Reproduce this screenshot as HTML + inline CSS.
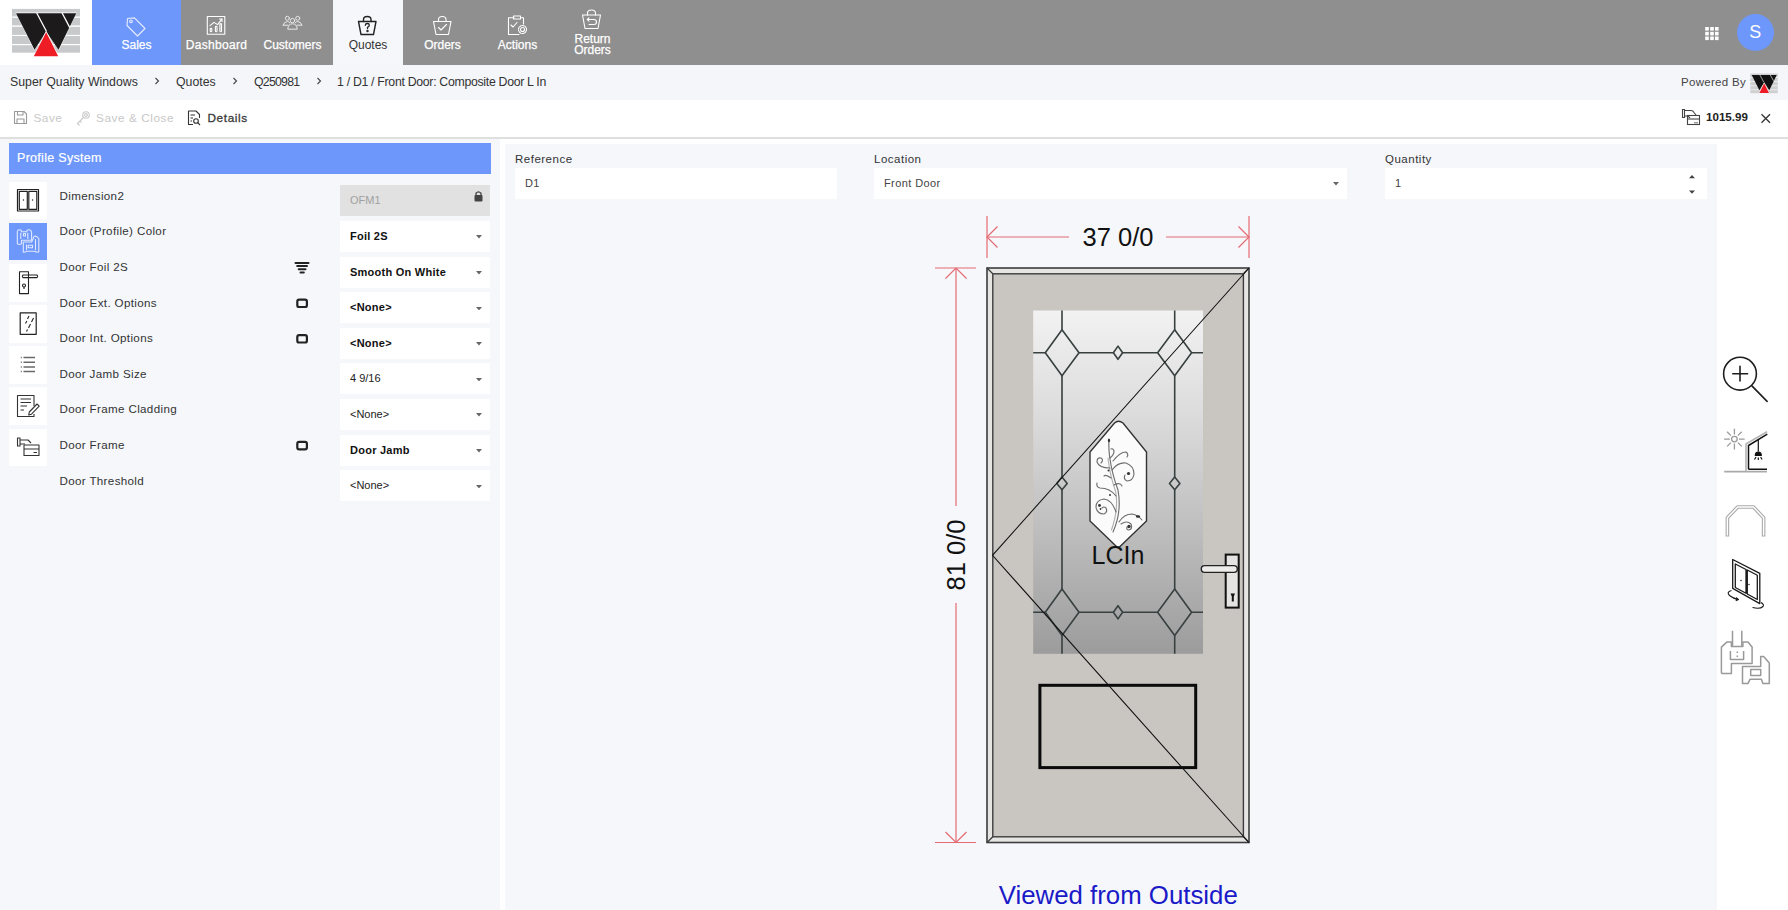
<!DOCTYPE html>
<html><head><meta charset="utf-8">
<style>
*{box-sizing:border-box;margin:0;padding:0}
html,body{width:1788px;height:910px;overflow:hidden;background:#fff;font-family:"Liberation Sans",sans-serif;position:relative}
.a{position:absolute}
.nav{left:0;top:0;width:1788px;height:65px;background:#8f8f8f}
.logo{left:0;top:0;width:92px;height:65px;background:#fff}
.tab{top:0;height:65px;color:#fff;font-size:12px;text-align:center}
.tab .lbl{position:absolute;left:0;right:0;top:38.8px;line-height:13px;-webkit-text-stroke:0.25px currentColor}
.crumb{left:0;top:65px;width:1788px;height:35px;background:#f4f6fa;font-size:12.5px;color:#333}
.tool{left:0;top:100px;width:1788px;height:39px;background:#fff;border-bottom:2px solid #dfdfdf}
.lp{left:0;top:139px;width:500px;height:771px;background:#f5f7fb}
.mp{left:505px;top:143.5px;width:1212px;height:767px;background:#f5f7fb}
.hdr{left:9px;top:143px;width:482px;height:31px;background:#6d97fb;color:#fff;font-size:12.5px;line-height:30px;padding-left:8px;letter-spacing:0.3px;-webkit-text-stroke:0.2px #fff}
.ib{left:9px;width:38px;height:38px;background:#fff}
.lab{left:59.5px;font-size:11.6px;color:#333;line-height:14px;letter-spacing:0.35px}
.dd{left:340px;width:150px;height:31px;background:#fff;font-size:11px;color:#222;line-height:31px;padding-left:10px}
.dd.b{font-weight:bold;color:#111;letter-spacing:0.25px}
.car{position:absolute;right:8.4px;top:14.4px;width:6px;height:3.6px}
.flab{font-size:11.5px;color:#333;top:152px;line-height:14px;letter-spacing:0.5px}
.inp{top:168px;height:31px;background:#fff;font-size:11px;color:#444;line-height:31px;padding-left:10px;letter-spacing:0.4px}
</style></head><body>
<div class="a nav"></div>
<div class="a logo"></div>
<svg class="a" style="left:0;top:0" width="92" height="65" viewBox="0 0 92 65">
<g fill="#c8c9cb">
<rect x="12" y="8.9" width="68" height="7.6"/>
<rect x="12" y="17.8" width="68" height="7.6"/>
<rect x="12" y="26.8" width="68" height="8.1"/>
<rect x="12" y="36" width="68" height="8"/>
<rect x="12" y="45.2" width="68" height="7.5"/>
</g>
<polygon points="15.5,12.6 76.8,12.6 58.8,50.5 46.2,30.8 34.2,50.5" fill="#fff"/>
<polygon points="16,13.2 76.3,13.2 58.5,49.8 46.2,31.4 34.5,49.8" fill="#1c1a1b"/>
<line x1="36.6" y1="12.8" x2="46.4" y2="31.2" stroke="#fff" stroke-width="1.3"/>
<line x1="62" y1="12.8" x2="69.8" y2="27.6" stroke="#fff" stroke-width="1.3"/>
<polygon points="46.2,30.6 59.4,57 33,57" fill="#fff"/>
<polygon points="46.2,32.2 58.2,56.3 33.8,56.3" fill="#ee1c24"/>
</svg>

<div class="a tab" style="left:92px;width:89px;background:#6d97fb"><div class="lbl">Sales</div></div>
<div class="a tab" style="left:181px;width:71px"><div class="lbl" style="letter-spacing:0.3px">Dashboard</div></div>
<div class="a tab" style="left:252px;width:81px"><div class="lbl">Customers</div></div>
<div class="a tab" style="left:333px;width:70px;background:#f5f7fb;color:#333"><div class="lbl" style="-webkit-text-stroke:0">Quotes</div></div>
<div class="a tab" style="left:403px;width:79px"><div class="lbl">Orders</div></div>
<div class="a tab" style="left:480px;width:75px"><div class="lbl">Actions</div></div>
<div class="a tab" style="left:555px;width:75px"><div class="lbl" style="top:34px;line-height:11px">Return<br>Orders</div></div>
<svg class="a" style="left:0;top:0" width="640" height="65" viewBox="0 0 640 65" fill="none" stroke-linecap="round" stroke-linejoin="round">
<!-- sales tag -->
<g stroke="#dfe8ff" stroke-width="1.2">
<path d="M127.5,18.5 L134.5,17.8 L145,28.5 L137.5,36 L127,25.5 Z"/>
<circle cx="131" cy="21.3" r="1.3"/>
</g>
<!-- dashboard -->
<g stroke="#fff" stroke-width="1.1">
<rect x="207.3" y="16.5" width="17.5" height="17.8"/>
<path d="M210,25.6 L214,22.4 L217.6,24.6 L221.8,19.2"/>
<path d="M219.5,19 L222,19 L222,21.5"/>
<rect x="210.2" y="28.2" width="1.6" height="3.6" rx="0.8"/>
<rect x="215.4" y="26.3" width="1.6" height="5.5" rx="0.8"/>
<rect x="219.9" y="23.6" width="1.6" height="8.2" rx="0.8"/>
</g>
<!-- customers -->
<g stroke="#e8e8e8" stroke-width="1">
<circle cx="287.4" cy="18.3" r="2"/>
<circle cx="297.7" cy="18.3" r="2"/>
<circle cx="292.5" cy="20.6" r="2.2"/>
<path d="M283.2,25.2 Q283.8,21.6 287.4,21.6 Q289,21.6 289.8,22.8"/>
<path d="M301.8,25.2 Q301.2,21.6 297.7,21.6 Q296,21.6 295.2,22.8"/>
<path d="M283.2,25.2 L288,25.2 M301.8,25.2 L297,25.2"/>
<path d="M287.8,28.8 Q288,23.8 292.5,23.8 Q297,23.8 297.2,28.8 Z"/>
</g>
<!-- quotes bag -->
<g stroke="#222" stroke-width="1.4">
<path d="M358.5,21.5 L376,21.5 L373.5,34.5 L361,34.5 Z"/>
<path d="M363.5,21.5 L363.5,19.5 Q363.5,16.5 367.3,16.5 Q371,16.5 371,19.5 L371,21.5"/>
<path d="M365.3,25.3 Q365.5,23.5 367.4,23.5 Q369.3,23.5 369.3,25.2 Q369.3,26.5 367.5,27.3 L367.5,28.5" stroke-width="1.3"/>
<circle cx="367.5" cy="31" r="0.5" fill="#222"/>
</g>
<!-- orders bag -->
<g stroke="#fff" stroke-width="1.1">
<path d="M433.5,21.5 L451,21.5 L448.5,34.5 L436,34.5 Z"/>
<path d="M438.5,21.5 L438.5,19.5 Q438.5,16.5 442.3,16.5 Q446,16.5 446,19.5 L446,21.5"/>
<path d="M438.5,27.5 L441,30 L446.5,24.5"/>
</g>
<!-- actions clipboard -->
<g stroke="#fff" stroke-width="1.1">
<path d="M514,17.8 L508.5,17.8 L508.5,34.5 L519,34.5"/>
<path d="M520.5,17.8 L523.5,17.8 L523.5,24"/>
<rect x="513.5" y="16" width="7" height="3"/>
<path d="M511,25 L513,27 L517,22.5"/>
<circle cx="522.5" cy="29.5" r="2"/>
<circle cx="522.5" cy="29.5" r="4" stroke-dasharray="1.6 1"/>
</g>
<!-- return bag -->
<g stroke="#fff" stroke-width="1.1">
<path d="M582.5,15 L600.5,15 L598,28.5 L585,28.5 Z"/>
<path d="M587.5,15 L587.5,13.2 Q587.5,10 591.5,10 Q595.5,10 595.5,13.2 L595.5,15"/>
<path d="M587.5,19.5 L594,19.5 Q596.5,19.5 596.5,22 Q596.5,24.5 594,24.5 L589,24.5"/>
<path d="M589,17.8 L587.3,19.5 L589,21.2"/>
</g>
</svg>
<div class="a crumb"></div>
<div class="a" style="left:10px;top:75px;font-size:12.3px;color:#333;line-height:14px;white-space:nowrap">Super Quality Windows</div>
<div class="a" style="left:176px;top:75px;font-size:12.3px;color:#333;line-height:14px">Quotes</div>
<div class="a" style="left:254px;top:75px;font-size:12.3px;color:#333;line-height:14px;letter-spacing:-0.75px">Q250981</div>
<div class="a" style="left:337px;top:75px;font-size:12.3px;color:#333;line-height:14px;white-space:nowrap;letter-spacing:-0.3px">1 / D1 / Front Door: Composite Door L In</div>
<svg class="a" style="left:0;top:65px" width="400" height="35" fill="none" stroke="#444" stroke-width="1.1">
<path d="M155.5,13 L158.5,16 L155.5,19"/>
<path d="M233.5,13 L236.5,16 L233.5,19"/>
<path d="M317.5,13 L320.5,16 L317.5,19"/>
</svg>
<div class="a" style="left:1681px;top:75px;font-size:11.5px;color:#444;line-height:14px;white-space:nowrap;letter-spacing:0.3px">Powered By</div>
<div class="a tool"></div>
<svg class="a" style="left:1700px;top:20px" width="88" height="30">
<g fill="#fff">
<rect x="5.2" y="7" width="3.6" height="3.6"/><rect x="10.2" y="7" width="3.6" height="3.6"/><rect x="15" y="7" width="3.6" height="3.6"/>
<rect x="5.2" y="11.8" width="3.6" height="3.6"/><rect x="10.2" y="11.8" width="3.6" height="3.6"/><rect x="15" y="11.8" width="3.6" height="3.6"/>
<rect x="5.2" y="16.5" width="3.6" height="3.6"/><rect x="10.2" y="16.5" width="3.6" height="3.6"/><rect x="15" y="16.5" width="3.6" height="3.6"/>
</g>
</svg>
<div class="a" style="left:1736.5px;top:13.5px;width:37.6px;height:37.6px;border-radius:50%;background:#6d97fb;color:#fff;font-size:18px;line-height:37.6px;text-align:center">S</div>
<svg class="a" style="left:1749px;top:72px" width="30" height="22" viewBox="0 0 30 22">
<g fill="#cfcfcf"><rect x="1.3" y="1.5" width="27.5" height="3.6"/><rect x="1.3" y="5.8" width="27.5" height="3.4"/><rect x="1.3" y="10" width="27.5" height="3.5"/><rect x="1.3" y="14.2" width="27.5" height="3.3"/><rect x="1.3" y="18.2" width="27.5" height="3"/></g>
<polygon points="2.7,3 27.7,3 20.3,18.3 15.2,10.3 10.4,18.3" fill="#111"/>
<line x1="10.8" y1="2.8" x2="14.8" y2="10.2" stroke="#fff" stroke-width="0.6"/>
<line x1="21.2" y1="2.8" x2="24.5" y2="8.8" stroke="#fff" stroke-width="0.6"/>
<polygon points="15.2,10.5 20.5,21.3 9.9,21.3" fill="#fff"/>
<polygon points="15.2,11.3 20,21 10.4,21" fill="#ee1c24"/>
</svg>
<svg class="a" style="left:1678px;top:105px" width="100" height="25" fill="none">
<g stroke="#444" stroke-width="1.1">
<path d="M4.5,4.5 L6.5,4.5 L6.5,12.5 L4.5,12.5 Z"/>
<path d="M6.5,5.5 L13,5.5 Q15,5.5 16,7.5 L18,10 M6.5,11 L10,11 L12,13"/>
<rect x="9.5" y="10.5" width="12" height="9"/>
</g>
<path d="M10,13 L21,13 L21,15 L10,15 Z M16,17 L20,17 L20,18.5 L16,18.5 Z" fill="#999"/>
<path d="M83.5,9.3 L92,17.8 M92,9.3 L83.5,17.8" stroke="#333" stroke-width="1.3"/>
</svg>
<div class="a" style="left:1706px;top:110px;font-size:11.6px;font-weight:bold;color:#222;line-height:14px">1015.99</div>
<svg class="a" style="left:0;top:100px" width="260" height="37" fill="none" stroke-linejoin="round">
<g stroke="#9a9a9a" stroke-width="1.1">
<path d="M14.5,11.5 L24,11.5 L26.5,14 L26.5,23.5 L14.5,23.5 Z"/>
<path d="M17.5,11.5 L17.5,15 L23,15 L23,11.5"/>
<path d="M17,23.5 L17,19 L24,19 L24,23.5"/>
</g>
<g stroke="#c9c9c9" stroke-width="1.1">
<circle cx="86" cy="15" r="3.3"/>
<circle cx="86" cy="15" r="1.4"/>
<path d="M83.5,17.5 L77.5,23.5 L79.5,25.5 M80,21 L81.5,22.5"/>
</g>
<g stroke="#333" stroke-width="1.1">
<path d="M196,11 L188.5,11 L188.5,24.5 L193,24.5"/>
<path d="M196,11 L199.5,14.5 L199.5,18"/>
<path d="M190.5,15 L195,15 M190.5,18 L193,18 M190.5,21 L192,21"/>
<circle cx="196" cy="21" r="2.3"/>
<path d="M197.7,22.7 L200,25"/>
</g>
</svg>
<div class="a" style="left:33.5px;top:111px;font-size:11.8px;color:#c8c8c8;line-height:14px;letter-spacing:0.5px">Save</div>
<div class="a" style="left:96px;top:111px;font-size:11.8px;color:#c8c8c8;line-height:14px;white-space:nowrap;letter-spacing:0.55px">Save &amp; Close</div>
<div class="a" style="left:207.5px;top:111px;font-size:11.8px;color:#3a3a3a;line-height:14px;-webkit-text-stroke:0.3px #3a3a3a;letter-spacing:0.6px">Details</div>
<div class="a lp"></div>
<div class="a mp"></div>
<div class="a hdr">Profile System</div>
<div class="a ib" style="top:181.7px;height:37.5px;background:#fff"></div>
<div class="a ib" style="top:222.8px;height:37.5px;background:#6d97fb"></div>
<div class="a ib" style="top:264.0px;height:37.5px;background:#fff"></div>
<div class="a ib" style="top:305.1px;height:37.5px;background:#fff"></div>
<div class="a ib" style="top:346.3px;height:37.5px;background:#fff"></div>
<div class="a ib" style="top:387.4px;height:37.5px;background:#fff"></div>
<div class="a ib" style="top:428.6px;height:37.5px;background:#fff"></div>
<div class="a lab" style="top:188.7px">Dimension2</div>
<div class="a dd" style="top:185.4px;background:#e1e1e2;color:#a0a0a0">OFM1</div>
<div class="a lab" style="top:224.3px">Door (Profile) Color</div>
<div class="a dd b" style="top:221.0px">Foil 2S<svg class="car" viewBox="0 0 6 3.6"><path d="M0,0 L6,0 L3,3.4 Z" fill="#666"/></svg></div>
<div class="a lab" style="top:259.9px">Door Foil 2S</div>
<div class="a dd b" style="top:256.6px">Smooth On White<svg class="car" viewBox="0 0 6 3.6"><path d="M0,0 L6,0 L3,3.4 Z" fill="#666"/></svg></div>
<div class="a lab" style="top:295.5px">Door Ext. Options</div>
<div class="a dd b" style="top:292.2px">&lt;None&gt;<svg class="car" viewBox="0 0 6 3.6"><path d="M0,0 L6,0 L3,3.4 Z" fill="#666"/></svg></div>
<div class="a lab" style="top:331.1px">Door Int. Options</div>
<div class="a dd b" style="top:327.8px">&lt;None&gt;<svg class="car" viewBox="0 0 6 3.6"><path d="M0,0 L6,0 L3,3.4 Z" fill="#666"/></svg></div>
<div class="a lab" style="top:366.7px">Door Jamb Size</div>
<div class="a dd" style="top:363.4px">4 9/16<svg class="car" viewBox="0 0 6 3.6"><path d="M0,0 L6,0 L3,3.4 Z" fill="#666"/></svg></div>
<div class="a lab" style="top:402.3px">Door Frame Cladding</div>
<div class="a dd" style="top:399.0px">&lt;None&gt;<svg class="car" viewBox="0 0 6 3.6"><path d="M0,0 L6,0 L3,3.4 Z" fill="#666"/></svg></div>
<div class="a lab" style="top:437.9px">Door Frame</div>
<div class="a dd b" style="top:434.6px">Door Jamb<svg class="car" viewBox="0 0 6 3.6"><path d="M0,0 L6,0 L3,3.4 Z" fill="#666"/></svg></div>
<div class="a lab" style="top:473.5px">Door Threshold</div>
<div class="a dd" style="top:470.2px">&lt;None&gt;<svg class="car" viewBox="0 0 6 3.6"><path d="M0,0 L6,0 L3,3.4 Z" fill="#666"/></svg></div>
<svg class="a" style="left:0;top:170px" width="320" height="300" fill="none" stroke-linejoin="round">
<g stroke="#222" stroke-width="1.2">
<rect x="17.5" y="19.5" width="21" height="21.5"/>
<rect x="19.3" y="21.3" width="8" height="18"/>
<rect x="28.8" y="21.3" width="8" height="18"/>
</g>
<circle cx="23.5" cy="30" r="0.7" fill="#222"/><circle cx="32.5" cy="30" r="0.7" fill="#222"/>
<g stroke="#dfe8ff" stroke-width="1.1">
<path d="M17.3,61.5 Q17.5,59.8 19.5,59.8 Q21.5,59.8 21.8,61.8 L26.5,61.8 Q26.8,59.8 28.8,59.8 Q31.2,59.8 31.6,62.5 L31.6,70.3 L21.5,70.3 L21.5,73.8 Q19.5,75.2 17.3,73.8 Z"/>
<path d="M20.8,62.8 L20.8,69 M27.8,62.8 L27.8,69 M23.5,63.5 L25.5,63.5 L25.5,66 L23.5,66 Z"/>
<path d="M23.3,72 L31.6,72 L34.2,66.3 Q36.5,65.5 38.8,68.5 L38.8,81.8 Q37,82.8 34.8,81.3 L26.5,81.3 Q24.5,82.8 23.3,82 Z"/>
<path d="M26.5,74.5 L26.5,80 M35.5,69 L35.5,80 M28.2,75.2 L32.5,75.2 L32.5,77.8 L28.2,77.8 Z"/>
</g>
<g stroke="#222" stroke-width="1.1">
<rect x="19.5" y="101.8" width="9" height="21.8"/>
<path d="M23,105 L37,105 Q38.3,106.3 37,107.6 L23,107.6 Q21.7,106.3 23,105 Z"/>
<circle cx="24" cy="115.5" r="1.5"/>
<path d="M24,117 L24,119"/>
</g>
<g stroke="#222" stroke-width="1.2">
<rect x="20.2" y="142.8" width="16" height="21.5"/>
<path d="M29,146 L27.5,149 M26.8,151 L25.5,153.5 M33.5,148 L31.5,152 M30.5,154 L28.5,158 M27.5,159.5 L26.5,161.5" stroke-width="1.1"/>
</g>
<g stroke="#6a6a6a" stroke-width="1.5">
<path d="M23.5,187.5 L35,187.5 M23.5,192.2 L35,192.2 M23.5,196.9 L35,196.9 M23.5,201.5 L35,201.5"/>
<path d="M20.8,187.5 L21.8,187.5 M20.8,192.2 L21.8,192.2 M20.8,196.9 L21.8,196.9 M20.8,201.5 L21.8,201.5"/>
</g>
<g stroke="#333" stroke-width="1.1">
<path d="M34,236 L34,225.5 L17.5,225.5 L17.5,246.5 L34,246.5 L34,244"/>
<path d="M20.5,229 L31,229 M20.5,232.5 L31,232.5 M20.5,236 L27,236 M20.5,240 L24,240"/>
<path d="M37,234 L39.2,236.2 L31.5,244.2 L28.7,245 L29.3,242 Z"/>
</g>
<g stroke="#333" stroke-width="1.1">
<path d="M17.5,268 L17.5,276 L20,276 L20,268 Z"/>
<path d="M20,270 L28,270 L31,273 M20,274 L25,274"/>
<rect x="24" y="275" width="15" height="10.5"/>
<path d="M24,279 L39,279 M33.5,282.5 L37,282.5"/>
</g>
</svg>
<svg class="a" style="left:280px;top:170px" width="40" height="300" fill="none">
<g stroke="#222" stroke-width="2" stroke-linecap="round">
<path d="M15.5,92.9 L28.5,92.9"/>
<path d="M17.2,96 L27,96"/>
<path d="M18.7,99.2 L25.5,99.2"/>
<path d="M20.5,102.4 L23.8,102.4"/>
</g>
<g stroke="#222" stroke-width="2.2">
<rect x="17.3" y="129.6" width="9.6" height="7.4" rx="1.8"/>
<rect x="17.3" y="165.1" width="9.6" height="7.4" rx="1.8"/>
<rect x="17.3" y="271.9" width="9.6" height="7.4" rx="1.8"/>
</g>
</svg>
<svg class="a" style="left:470px;top:190px" width="20" height="20"><rect x="4.5" y="5" width="8" height="6.5" rx="1" fill="#444"/><path d="M6,5 L6,3.2 Q8.5,0.5 11,3.2 L11,5" fill="none" stroke="#444" stroke-width="1.3"/></svg>

<div class="a flab" style="left:515px">Reference</div>
<div class="a inp" style="left:515px;width:322px">D1</div>
<div class="a flab" style="left:874px">Location</div>
<div class="a inp" style="left:874px;width:473px">Front Door<svg class="car" viewBox="0 0 6 3.6" style="right:8.4px"><path d="M0,0 L6,0 L3,3.4 Z" fill="#666"/></svg></div>
<div class="a flab" style="left:1385px">Quantity</div>
<div class="a inp" style="left:1385px;width:322px">1</div>
<svg class="a" style="left:1685px;top:168px" width="16" height="31"><path d="M4,10.2 L7,7 L10,10.2 Z M4,22.5 L7,25.7 L10,22.5 Z" fill="#444"/></svg>
<svg class="a" style="left:900px;top:200px" width="380" height="660" viewBox="900 200 380 660">
<defs>
<linearGradient id="gl" x1="0" y1="0" x2="0" y2="1">
<stop offset="0" stop-color="#f2f2f2"/>
<stop offset="0.3" stop-color="#dcdcdc"/>
<stop offset="0.65" stop-color="#bdbdbd"/>
<stop offset="1" stop-color="#9d9c9d"/>
</linearGradient>
</defs>
<!-- dims -->
<g stroke="#e46a72" stroke-width="1.2" fill="none">
<path d="M987,216 L987,258 M1249,216 L1249,258"/>
<path d="M987,237 L1069,237 M1166,237 L1249,237"/>
<path d="M997.5,226.5 L987,237 L997.5,247.5 M1238.5,226.5 L1249,237 L1238.5,247.5"/>
<path d="M935,268 L976,268 M935,842.5 L976,842.5"/>
<path d="M956,268 L956,506 M956,603 L956,842.5"/>
<path d="M945.5,278.5 L956,268 L966.5,278.5 M945.5,832 L956,842.5 L966.5,832"/>
</g>
<text x="1118" y="246" font-family="Liberation Sans" font-size="25.5" text-anchor="middle" fill="#111">37 0/0</text>
<text x="0" y="0" font-family="Liberation Sans" font-size="25.5" text-anchor="middle" fill="#111" transform="translate(965,555) rotate(-90)">81 0/0</text>
<!-- door frame -->
<rect x="987" y="268" width="262" height="574.5" fill="#e6e5e4" stroke="#3c3c3c" stroke-width="1.6"/>
<rect x="992.8" y="273.8" width="250.6" height="563" fill="#c9c5c1" stroke="#3c3c3c" stroke-width="1.4"/>
<path d="M987,268 L992.8,273.8 M1249,268 L1243.4,273.8 M987,842.5 L992.8,836.8 M1249,842.5 L1243.4,836.8" stroke="#3c3c3c" stroke-width="1.3"/>
<!-- glass -->
<rect x="1033.2" y="310.5" width="169.8" height="343.3" fill="url(#gl)"/>
<g stroke="#384040" stroke-width="1.6" fill="none" stroke-linejoin="round">
<path d="M1062,310.5 L1062,329.7 M1062,375.8 L1062,477 M1062,489.8 L1062,589 M1062,635.5 L1062,653.8"/>
<path d="M1174.7,310.5 L1174.7,329.7 M1174.7,375.8 L1174.7,477 M1174.7,489.8 L1174.7,589 M1174.7,635.5 L1174.7,653.8"/>
<path d="M1033.2,352.7 L1045.3,352.7 M1079,352.7 L1113.4,352.7 M1122.6,352.7 L1157.6,352.7 M1191.6,352.7 L1203,352.7"/>
<path d="M1033.2,612.3 L1045.3,612.3 M1079,612.3 L1113.4,612.3 M1122.6,612.3 L1157.6,612.3 M1191.6,612.3 L1203,612.3"/>
<path d="M1062,329.7 L1079,352.7 L1062,375.8 L1045.3,352.7 Z"/>
<path d="M1174.7,329.7 L1191.6,352.7 L1174.7,375.8 L1157.6,352.7 Z"/>
<path d="M1062,589 L1079,612.3 L1062,635.5 L1045.3,612.3 Z"/>
<path d="M1174.7,589 L1191.6,612.3 L1174.7,635.5 L1157.6,612.3 Z"/>
<path d="M1118,346.1 L1122.6,352.7 L1118,359.3 L1113.4,352.7 Z"/>
<path d="M1118,605.7 L1122.6,612.3 L1118,618.9 L1113.4,612.3 Z"/>
<path d="M1062,477 L1067.2,483.4 L1062,489.8 L1056.8,483.4 Z"/>
<path d="M1174.7,477 L1179.9,483.4 L1174.7,489.8 L1169.5,483.4 Z"/>
</g>
<!-- hexagon -->
<path d="M1114.5,423 Q1118.5,419.5 1123,423 L1146.5,452 L1146.5,521 L1120,546.5 Q1118.3,548.2 1116.5,546.5 L1090,521 L1090,452 Z" fill="#fbfbfb" stroke="#333" stroke-width="1.4"/>
<g fill="none" stroke="#6e6e6e" stroke-width="1.15" stroke-linecap="round">
<path d="M1113,532 Q1122,512 1118,490 Q1112,474 1109.5,456 Q1108.5,446 1109,439"/>
<path d="M1111.5,530 Q1119,508 1115.5,491 Q1110,476 1108,458" stroke="#b0b0b0"/>
<path d="M1119,522 Q1124,514 1132,514 Q1138,515 1142,520"/>
<path d="M1121,524 Q1127,520 1131,524 Q1133,529 1129,530 Q1126,530 1127,527"/>
<path d="M1116,512 Q1112,500 1104,499 Q1096,500 1096,507 Q1097,514 1104,514 Q1108,512 1106,508 Q1104,506 1102,508"/>
<path d="M1116,496 Q1110,488 1100,488 Q1096,487 1097,483"/>
<path d="M1110,468 Q1099,468 1097,462 Q1097,457 1101,458 Q1104,460 1101,463"/>
<path d="M1112,470 Q1118,462 1126,463 Q1134,466 1134,474 Q1133,481 1127,481 Q1123,479 1125,475"/>
<path d="M1113,461 Q1120,452 1126,452 Q1129,454 1127,457"/>
<path d="M1110,458 Q1114,455 1114,451 Q1113,448 1111,449"/>
<path d="M1111,478 Q1106,474 1104,476"/>
<path d="M1114,485 Q1120,482 1122,486"/>
</g>
<g fill="#333"><ellipse cx="1109" cy="440.5" rx="1.1" ry="1.8"/><circle cx="1128.5" cy="473.5" r="1.6"/><circle cx="1099.5" cy="505.5" r="1.4"/><circle cx="1129" cy="526.5" r="1.7"/><ellipse cx="1138" cy="516.5" rx="2.2" ry="1.2"/><circle cx="1108.5" cy="470.5" r="1"/><circle cx="1110" cy="495" r="1"/><circle cx="1100.5" cy="509" r="0.9"/></g>
<text x="1118" y="563.5" font-family="Liberation Sans" font-size="25" text-anchor="middle" fill="#111">LCIn</text>
<!-- handle -->
<rect x="1225.7" y="554.6" width="13" height="53" fill="#e6e4e2" stroke="#111" stroke-width="2"/>
<rect x="1201.3" y="565.6" width="36" height="6.8" rx="3.4" fill="#eeecea" stroke="#222" stroke-width="1.4"/>
<path d="M1230.5,593.5 L1235,593.5 L1233.8,596.5 L1233.8,601.5 L1231.8,601.5 L1231.8,596.5 Z" fill="#111"/>
<!-- panel -->
<rect x="1039.9" y="685.3" width="155.8" height="82.3" fill="none" stroke="#0a0a0a" stroke-width="3"/>
<!-- diagonal -->
<path d="M1249,268 L992.5,555.3 L1249,842.5" fill="none" stroke="#111" stroke-width="1.05"/>
</svg>
<div class="a" style="left:900px;top:879.5px;width:436.5px;text-align:center;font-size:25.8px;color:#1a1ac8;line-height:30px">Viewed from Outside</div>
<svg class="a" style="left:1717px;top:340px" width="71" height="360" viewBox="1717 340 71 360" fill="none" stroke-linejoin="round">
<g stroke="#1e1e1e" stroke-width="1.6" stroke-linecap="round">
<circle cx="1740" cy="373.7" r="16.4"/>
<path d="M1732.8,373.7 L1747.6,373.7 M1740,366.3 L1740,381"/>
<path d="M1751.9,385.9 L1767.1,401.4"/>
</g>
<g stroke="#9a9a9a" stroke-width="1.3" stroke-linecap="butt">
<circle cx="1734.4" cy="439.1" r="2.8"/>
<path d="M1734.4,428.8 L1734.4,434.6 M1734.4,443.6 L1734.4,449.4 M1724.1,439.1 L1729.9,439.1 M1738.9,439.1 L1744.7,439.1 M1727.1,431.8 L1730.9,435.6 M1737.9,442.6 L1741.7,446.4 M1741.7,431.8 L1737.9,435.6 M1730.9,442.6 L1727.1,446.4"/>
</g>
<path d="M1724.2,471.7 L1767,471.7" stroke="#aaa" stroke-width="1.8"/>
<path d="M1746,471 L1746,444 L1767,431.8" stroke="#b4b4b4" stroke-width="1.6"/>
<path d="M1748.5,469.3 L1748.5,445.5 L1767.3,434.2 M1748.5,469.3 L1767,469.3" stroke="#111" stroke-width="1.5"/>
<g stroke="#111" stroke-width="1.2">
<path d="M1758.3,439 L1758.3,451.5"/>
<path d="M1755.3,455.5 Q1755.3,452 1758.3,452 Q1761.3,452 1761.3,455.5 Z" fill="#111"/>
<path d="M1756,457 L1754.5,459.5 M1758.3,457.5 L1758.3,460 M1760.6,457 L1762.1,459.5"/>
</g>
<path d="M1727.4,536.6 L1727.4,517.7 L1737.7,507 L1753.5,507 L1763.6,517.7 L1763.6,536.6" stroke="#aaa" stroke-width="3.6"/>
<path d="M1727.4,535.6 L1727.4,517.7 L1737.7,507 L1753.5,507 L1763.6,517.7 L1763.6,535.6" stroke="#fff" stroke-width="1.4"/>
<g stroke="#1a1a1a" stroke-width="1.3">
<path d="M1732.7,559.5 L1759.8,573.3 L1759.8,603.6 L1732.7,588.4 Z"/>
<path d="M1735.3,564 L1746,569.5 L1746,593.3 L1735.3,587.5 Z M1747.3,570 L1757.3,575.3 L1757.3,599.5 L1747.3,594 Z"/>
<path d="M1731.5,590.5 Q1726,592 1729.5,595.5 Q1733,598.5 1738.5,599.5 M1752.5,607.5 Q1760,609.5 1763,606.5 Q1764.5,604.5 1761,602.5" stroke-width="1.1"/>
<path d="M1736.5,597.5 L1738.8,599.6 L1736,600.8 Z" fill="#1a1a1a" stroke-width="0.8"/>
</g>
<circle cx="1741" cy="580.5" r="0.8" fill="#333"/><circle cx="1749" cy="584.5" r="0.8" fill="#333"/>
<g stroke="#999" stroke-width="1.5">
<path d="M1732.5,630.7 L1732.5,646.4 M1741.8,630.7 L1741.8,646.4"/>
<path d="M1721.4,647.1 L1726.8,642.1 L1731.4,642.1 L1731.4,646.4 L1742.9,646.4 L1742.9,642.1 L1747.9,642.1 L1752.1,647.1 L1752.1,663.6 L1731.4,663.6 L1731.4,673.6 L1722.1,673.6 L1721.4,672.5 Z"/>
<path d="M1730.4,651.1 L1730.4,659.6 L1743.6,659.6 L1743.6,651.1"/>
<path d="M1737.3,651.5 L1737.3,653 M1737.3,655.5 L1737.3,657"/>
<path d="M1742.5,666.4 L1760.7,666.4 L1760.7,656.4 L1763.6,656.4 L1769.3,662.9 L1769.3,683.6 L1762.9,683.6 L1761.4,679.3 L1750,679.3 L1747.9,683.6 L1742.5,683.6 Z"/>
<path d="M1750.7,669.6 L1760.7,669.6 L1760.7,675.4 L1750.7,675.4 Z"/>
</g>
</svg>
</body></html>
